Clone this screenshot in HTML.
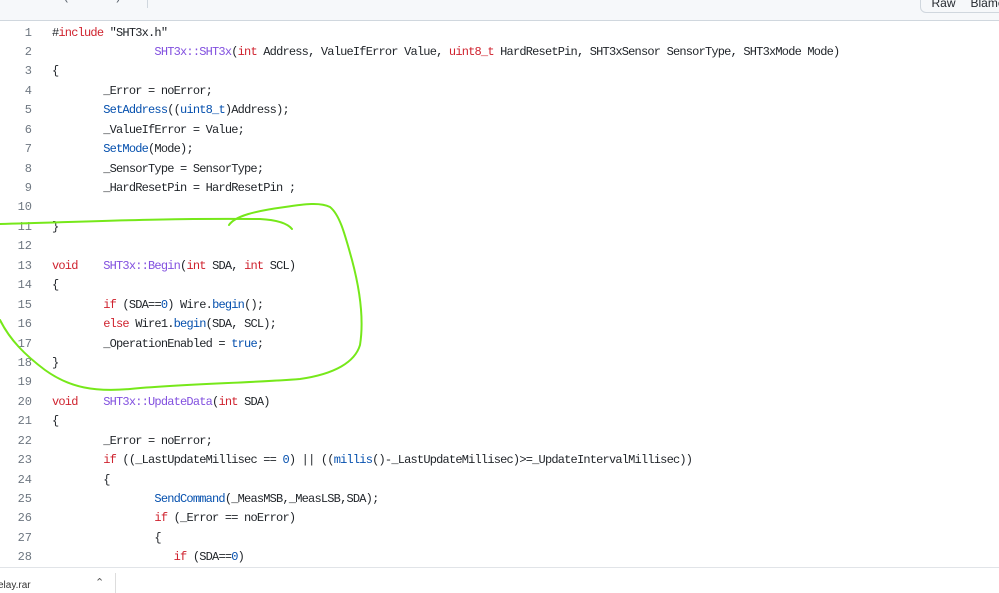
<!DOCTYPE html>
<html><head><meta charset="utf-8"><style>
html,body{margin:0;padding:0;width:999px;height:590px;overflow:hidden;background:#fff;font-family:"Liberation Sans",sans-serif}
.hdr{position:absolute;left:0;top:0;width:999px;height:20px;background:#f6f8fa;border-bottom:1px solid #d0d7de}
.hdr .t{position:absolute;left:8px;top:-12px;font-size:13px;color:#57606a}
.hdr .sep{position:absolute;left:147px;top:0;width:1px;height:8px;background:#d0d7de}
.hdr .t2{position:absolute;left:158px;top:-12px;font-size:13px;color:#57606a}
.btn{position:absolute;top:-10px;height:21px;border:1px solid #d0d7de;background:#f6f8fa;font-size:12px;color:#24292f;text-align:center;line-height:24px}
pre{position:absolute;left:0;top:23.5px;margin:0;font-family:"Liberation Mono",monospace;font-size:12px;letter-spacing:-0.8px;line-height:19.44px;color:#1f2328}
.ln{display:inline-block;width:32px;text-align:right;color:#6e7781;margin-right:20px;letter-spacing:0;font-size:12px}
.k{color:#cf222e}.f{color:#8250df}.b{color:#0550ae}.s{color:#0a3069}
.ft{position:absolute;left:0;top:567px;width:999px;height:23px;border-top:1px solid #e1e4e8;background:#fff}
.ft .n{position:absolute;left:-2px;top:12px;font-size:10px;color:#333}
.ft .sp{position:absolute;left:115px;top:5px;width:1px;height:20px;background:#ddd}
</style></head><body>
<div class="hdr"><span class="t">603 lines (504 sloc)</span><div class="sep"></div><span class="t2">12.2 KB</span>
<div class="btn" style="left:920px;width:45px;border-radius:0 0 0 6px">Raw</div>
<div class="btn" style="left:965px;width:45px;border-left:none">Blame</div></div>
<pre><span class="ln">1</span>#<span class="k">include</span> "SHT3x.h"
<span class="ln">2</span>                <span class="f">SHT3x::SHT3x</span>(<span class="k">int</span> Address, ValueIfError Value, <span class="k">uint8_t</span> HardResetPin, SHT3xSensor SensorType, SHT3xMode Mode)
<span class="ln">3</span>{
<span class="ln">4</span>        _Error = noError;
<span class="ln">5</span>        <span class="b">SetAddress</span>((<span class="b">uint8_t</span>)Address);
<span class="ln">6</span>        _ValueIfError = Value;
<span class="ln">7</span>        <span class="b">SetMode</span>(Mode);
<span class="ln">8</span>        _SensorType = SensorType;
<span class="ln">9</span>        _HardResetPin = HardResetPin ;
<span class="ln">10</span>
<span class="ln">11</span>}
<span class="ln">12</span>
<span class="ln">13</span><span class="k">void</span>    <span class="f">SHT3x::Begin</span>(<span class="k">int</span> SDA, <span class="k">int</span> SCL)
<span class="ln">14</span>{
<span class="ln">15</span>        <span class="k">if</span> (SDA==<span class="b">0</span>) Wire.<span class="b">begin</span>();
<span class="ln">16</span>        <span class="k">else</span> Wire1.<span class="b">begin</span>(SDA, SCL);
<span class="ln">17</span>        _OperationEnabled = <span class="b">true</span>;
<span class="ln">18</span>}
<span class="ln">19</span>
<span class="ln">20</span><span class="k">void</span>    <span class="f">SHT3x::UpdateData</span>(<span class="k">int</span> SDA)
<span class="ln">21</span>{
<span class="ln">22</span>        _Error = noError;
<span class="ln">23</span>        <span class="k">if</span> ((_LastUpdateMillisec == <span class="b">0</span>) || ((<span class="b">millis</span>()-_LastUpdateMillisec)&gt;=_UpdateIntervalMillisec))
<span class="ln">24</span>        {
<span class="ln">25</span>                <span class="b">SendCommand</span>(_MeasMSB,_MeasLSB,SDA);
<span class="ln">26</span>                <span class="k">if</span> (_Error == noError)
<span class="ln">27</span>                {
<span class="ln">28</span>                   <span class="k">if</span> (SDA==<span class="b">0</span>)
</pre>
<svg style="position:absolute;left:0;top:0" width="999" height="590">
<g fill="none" stroke="#76e81a" stroke-width="2" stroke-linecap="round">
<path d="M0,224 C80,222 160,218 260,219 C278,220 288,224 292,229"/>
<path d="M229,225 C235,216 255,211 285,207 C305,204 320,202 330,207 C340,215 345,235 352,260 C360,290 364,320 360,345 C355,362 335,374 300,379 C250,383 180,384 130,389 C95,392 70,388 45,370 C25,355 10,340 0,320"/>
</g></svg>
<div class="ft"><span class="n">elay.rar</span><span style="position:absolute;left:95px;top:8px;font-size:11px;color:#555">&#8963;</span><div class="sp"></div></div>
</body></html>
